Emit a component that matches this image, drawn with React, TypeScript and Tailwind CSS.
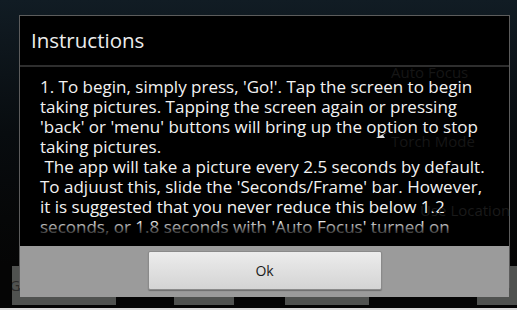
import React from "react";

const bodyFont = { fontFamily: '"Open Sans", "DejaVu Sans", sans-serif' };

const lines = [
  "1. To begin, simply press, 'Go!'. Tap the screen to begin",
  "taking pictures. Tapping the screen again or pressing",
  "'back' or 'menu' buttons will bring up the option to stop",
  "taking pictures.",
  "\u00a0The app will take a picture every 2.5 seconds by default.",
  "To adjuust this, slide the 'Seconds/Frame' bar. However,",
  "it is suggested that you never reduce this below 1.2",
  "seconds, or 1.8 seconds with 'Auto Focus' turned on",
];

export default function App() {
  return (
    <div
      className="relative w-[517px] h-[310px] overflow-hidden bg-[#0a0f13] flex flex-col"
      style={bodyFont}
    >
      {/* page behind */}
      <div className="flex-1 bg-gradient-to-b from-[#111c24] via-[#080c0f] to-[#050505]" />
      <div className="h-[39px] flex bg-[#050505]">
        <div className="ml-[12px] w-[104px] bg-[#505250] flex items-center justify-center text-[15px] text-[#2b2b2b] whitespace-nowrap overflow-hidden">
          Generate Video
        </div>
        <div className="ml-[58px] w-[60px] bg-[#505250] flex items-center justify-center text-[15px] text-[#2b2b2b] whitespace-nowrap overflow-hidden">
          Play Vid
        </div>
        <div className="ml-[51px] w-[84px] bg-[#505250] flex items-center justify-center text-[15px] text-[#2b2b2b] whitespace-nowrap overflow-hidden">
          Instructions
        </div>
        <div className="ml-[108px] w-[40px] bg-[#505250] flex items-center pl-[8px] text-[15px] text-[#2b2b2b] overflow-hidden whitespace-nowrap">
          Set
        </div>
      </div>
      <div className="h-[5px] bg-[#050505] flex flex-col justify-end">
        <div className="h-[2px] bg-[#dcdcdc]" />
      </div>

      {/* dialog */}
      <div className="absolute left-[19px] top-[15px] w-[491px] h-[273px] border border-[#5c5c5c] bg-black flex flex-col">
        <div className="h-[49px] shrink-0 flex items-center pl-[11px] text-[20.5px] text-[#ececec]">
          Instructions
        </div>
        <div className="h-[2px] shrink-0 bg-[#2e2e2e]" />
        <div className="relative flex-1 pb-[9px] flex flex-col">
          <div className="relative flex-1 overflow-hidden pl-[20px] pt-[10px]">
            <div className="absolute left-[371px] top-[-6px] text-[15px] text-[#161616] whitespace-nowrap">
              Auto Focus
            </div>
            <div className="absolute left-[371px] top-[63px] text-[15px] text-[#161616] whitespace-nowrap">
              Torch Mode
            </div>
            <div className="relative text-[17px] leading-[20px] text-[#f2f2f2] whitespace-nowrap">
              {lines.map((l, i) => (
                <div key={i}>{l}</div>
              ))}
            </div>
            <svg
              className="absolute left-[356px] top-[64px]"
              width="12"
              height="8"
              viewBox="0 0 12 8"
            >
              <path d="M0 7 L11 1 L7 4 L9 7 Z" fill="#e0e0e0" />
            </svg>
            <div className="absolute left-0 right-0 bottom-0 h-[16px] bg-gradient-to-b from-transparent to-black" />
          </div>
        </div>
        <div className="h-[51px] shrink-0 bg-[#9b9b9b] flex justify-center pt-[5px]">
          <div className="w-[234px] h-[39px] rounded-[2px] border border-[#8a8a8a] bg-gradient-to-b from-[#ececec] to-[#d4d4d4] flex items-center justify-center text-[14px] text-[#1a1a1a] shadow-[0_1px_1px_rgba(0,0,0,0.3)]">
            Ok
          </div>
        </div>
      </div>

      {/* faint text bleeding through at right edge */}
      <div className="absolute left-[420px] top-[199px] text-[15px] text-[#1a1a1a] whitespace-nowrap">
        Use Location
      </div>
    </div>
  );
}
